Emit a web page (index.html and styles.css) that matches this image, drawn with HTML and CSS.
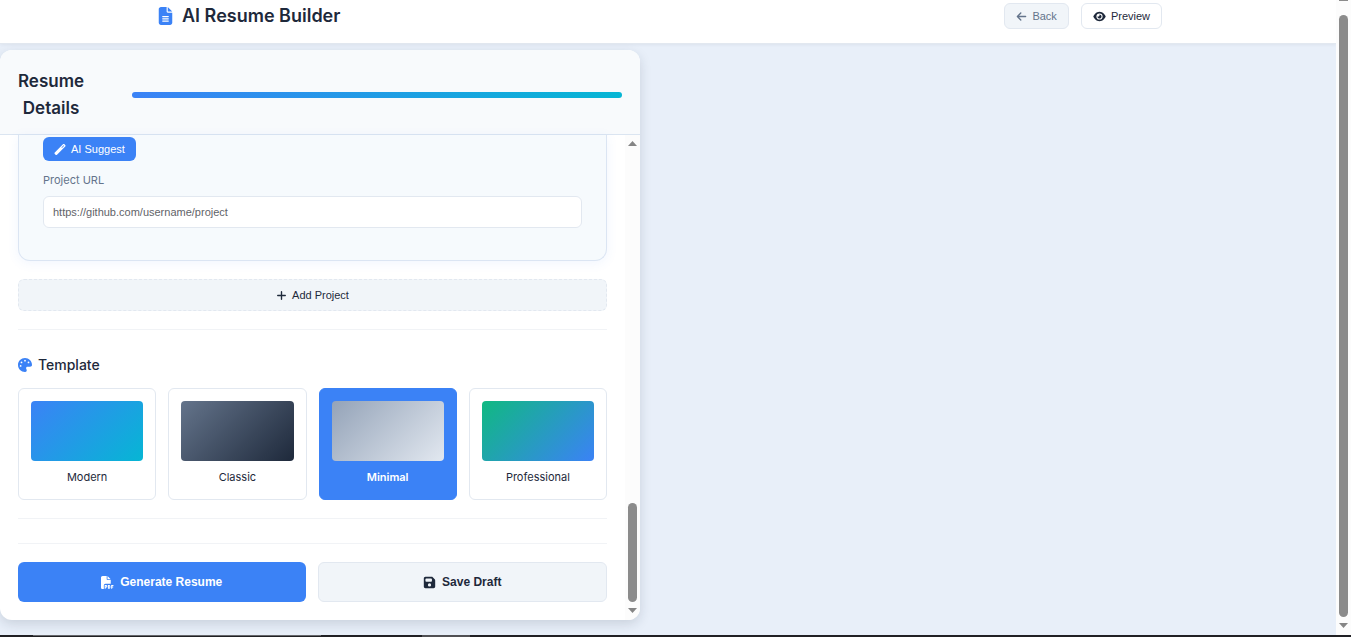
FILE: index.html
```html
<!DOCTYPE html>
<html lang="en">
<head>
<meta charset="utf-8">
<meta name="viewport" content="width=device-width, initial-scale=1">
<title>AI Resume Builder</title>
<link rel="stylesheet" href="styles.css">
</head>
<body>
<div class="window">
  <div class="viewport">
    <div class="page">
      <header class="topbar">
        <div class="topbar-inner">
          <h1 class="logo">
            <svg class="logo-icon" viewBox="0 0 384 512" aria-hidden="true"><path d="M64 0C28.700 0 0 28.700 0 64V448c0 35.300 28.700 64 64 64H320c35.300 0 64-28.700 64-64V160H256c-17.700 0-32-14.300-32-32V0H64zM256 0V128H384L256 0zM112 256H272c8.800 0 16 7.200 16 16s-7.200 16-16 16H112c-8.800 0-16-7.200-16-16s7.200-16 16-16zm0 64H272c8.800 0 16 7.200 16 16s-7.200 16-16 16H112c-8.800 0-16-7.200-16-16s7.200-16 16-16zm0 64H272c8.800 0 16 7.200 16 16s-7.200 16-16 16H112c-8.800 0-16-7.200-16-16s7.200-16 16-16z"/></svg>
            AI Resume Builder
          </h1>
          <nav class="topbar-actions">
            <button class="btn btn-back" type="button">
              <svg class="icon" viewBox="0 0 448 512" aria-hidden="true"><path d="M9.400 233.400c-12.500 12.500-12.500 32.800 0 45.300l160 160c12.500 12.500 32.800 12.500 45.300 0s12.500-32.800 0-45.300L109.200 288 416 288c17.700 0 32-14.300 32-32s-14.300-32-32-32l-306.700 0L214.600 118.600c12.500-12.500 12.500-32.800 0-45.300s-32.800-12.500-45.300 0l-160 160z"/></svg>
              Back
            </button>
            <button class="btn btn-preview" type="button">
              <svg class="icon icon-wide" viewBox="0 0 576 512" aria-hidden="true"><path d="M288 32c-80.800 0-145.500 36.800-192.600 80.600C48.600 156 17.300 208 2.500 243.700c-3.300 7.900-3.300 16.700 0 24.600C17.300 304 48.600 356 95.400 399.400C142.500 443.200 207.200 480 288 480s145.500-36.800 192.600-80.600c46.800-43.500 78.100-95.400 93-131.100c3.300-7.900 3.300-16.700 0-24.600c-14.900-35.700-46.200-87.700-93-131.100C433.500 68.800 368.800 32 288 32zM144 256a144 144 0 1 1 288 0 144 144 0 1 1 -288 0zm144-64c0 35.300-28.700 64-64 64c-7.100 0-13.900-1.200-20.300-3.300c-5.500-1.800-11.900 1.600-11.700 7.400c.3 6.900 1.300 13.800 3.200 20.700c13.700 51.200 66.400 81.600 117.600 67.900s81.600-66.400 67.900-117.600c-11.100-41.500-47.800-69.400-88.600-71.100c-5.800-.2-9.200 6.100-7.400 11.700c2.100 6.400 3.300 13.200 3.300 20.300z"/></svg>
              Preview
            </button>
          </nav>
        </div>
      </header>

      <main class="workspace">
        <section class="panel">
          <div class="panel-head">
            <h2 class="panel-title">Resume<br>Details</h2>
            <div class="progress" role="progressbar" aria-label="Resume progress" aria-valuenow="100" aria-valuemin="0" aria-valuemax="100"></div>
          </div>
          <div class="panel-body">
            <form class="form">
              <div class="project">
                <button class="btn btn-suggest" type="button">
                  <svg class="icon icon-wand" viewBox="0 0 512 512" aria-hidden="true"><path d="M14.100 463.300c-18.700-18.700-18.700-49.100 0-67.900L395.400 14.100c18.700-18.700 49.100-18.700 67.900 0l34.600 34.600c18.700 18.700 18.700 49.100 0 67.900L116.500 497.900c-18.700 18.700-49.100 18.700-67.900 0L14.100 463.300zM347.600 187.600l105-105L429.400 59.300l-105 105 23.300 23.300z"/></svg>
                  AI Suggest
                </button>
                <label class="field-label" for="project-url">Project URL</label>
                <input class="field" id="project-url" type="url" placeholder="https://github.com/username/project">
              </div>
              <button class="btn btn-add" type="button">
                <svg class="icon" viewBox="0 0 448 512" aria-hidden="true"><path d="M256 80c0-17.700-14.300-32-32-32s-32 14.300-32 32V224H48c-17.700 0-32 14.300-32 32s14.300 32 32 32H192V432c0 17.700 14.300 32 32 32s32-14.300 32-32V288H400c17.700 0 32-14.300 32-32s-14.300-32-32-32H256V80z"/></svg>
                Add Project
              </button>
              <div class="section">
                <h3 class="section-title">
                  <svg class="section-icon" viewBox="0 0 512 512" aria-hidden="true"><path d="M512 256c0 .9 0 1.800 0 2.700c-.4 36.500-33.600 61.300-70.100 61.300H344c-26.500 0-48 21.500-48 48c0 3.400 .4 6.700 1 9.900c2.100 10.200 6.500 20 10.800 29.900c6.100 13.800 12.100 27.500 12.100 42c0 31.800-21.600 60.700-53.400 62c-3.500 .1-7 .2-10.600 .2C114.600 512 0 397.400 0 256S114.600 0 256 0S512 114.600 512 256zM128 288a32 32 0 1 0 -64 0 32 32 0 1 0 64 0zm0-96a32 32 0 1 0 0-64 32 32 0 1 0 0 64zM288 96a32 32 0 1 0 -64 0 32 32 0 1 0 64 0zm96 96a32 32 0 1 0 0-64 32 32 0 1 0 0 64z"/></svg>
                  Template
                </h3>
                <div class="templates">
                  <label class="template"><input class="template-radio" type="radio" name="template"><span class="swatch swatch-modern"></span>Modern</label>
                  <label class="template"><input class="template-radio" type="radio" name="template"><span class="swatch swatch-classic"></span>Classic</label>
                  <label class="template"><input class="template-radio" type="radio" name="template" checked><span class="swatch swatch-minimal"></span>Minimal</label>
                  <label class="template"><input class="template-radio" type="radio" name="template"><span class="swatch swatch-professional"></span>Professional</label>
                </div>
              </div>
              <div class="actions">
                <button class="btn btn-large btn-generate" type="button">
                  <svg class="icon-large" viewBox="0 0 512 512" aria-hidden="true"><path d="M0 64C0 28.700 28.700 0 64 0H224V128c0 17.700 14.300 32 32 32H384V304H176c-35.300 0-64 28.700-64 64V512H64c-35.300 0-64-28.700-64-64V64zM384 128H256V0L384 128z"/><path class="badge-lines" d="M164 498V370h30a34 34 0 0 1 0 72h-30M292 370h22a34 34 0 0 1 34 34v46a34 34 0 0 1-34 34h-22zM420 498V370h70M420 434h60"/></svg>
                  Generate Resume
                </button>
                <button class="btn btn-large btn-save" type="button">
                  <svg class="icon-large" viewBox="0 0 448 512" aria-hidden="true"><path d="M64 32C28.700 32 0 60.700 0 96V416c0 35.300 28.700 64 64 64H384c35.300 0 64-28.700 64-64V173.300c0-17-6.700-33.300-18.700-45.300L352 50.700C340 38.700 323.700 32 306.700 32H64zm0 96c0-17.700 14.300-32 32-32H288c17.700 0 32 14.300 32 32v64c0 17.700-14.300 32-32 32H96c-17.700 0-32-14.300-32-32V128zM224 288a64 64 0 1 1 0 128 64 64 0 1 1 0-128z"/></svg>
                  Save Draft
                </button>
              </div>
            </form>
            <div class="scrollbar scrollbar-panel" aria-hidden="true">
              <span class="arrow arrow-up"></span>
              <span class="thumb thumb-short"></span>
              <span class="arrow arrow-down"></span>
            </div>
          </div>
        </section>
      </main>
    </div>
    <div class="scrollbar scrollbar-page" aria-hidden="true">
      <span class="thumb-cap"></span>
      <span class="thumb thumb-long"></span>
      <span class="arrow arrow-down"></span>
    </div>
  </div>
  <div class="strip" aria-hidden="true"><span class="strip-start"></span><span class="strip-search"></span><span class="strip-gap"></span><span class="strip-active"></span></div>
</div>
</body>
</html>
```
FILE: styles.css
```css
* {
  box-sizing: border-box;
}

body {
  margin: 0;
  font-family: Inter, "Liberation Sans", sans-serif;
  font-optical-sizing: none;
  color: #1e293b;
  background: #e8eff9;
}

h1, h2, h3 {
  margin: 0;
}

svg {
  fill: currentColor;
  flex: none;
}

.window {
  display: flex;
  flex-direction: column;
  min-height: 100vh;
}

.viewport {
  display: flex;
  flex: 1;
}

.page {
  flex: 1;
  min-width: 0;
}

/* Top bar */
.topbar {
  padding: 3px 0 14px;
  background: #fff;
  border-bottom: 1px solid #e2e8f0;
  box-shadow: 0 1px 3px rgba(30, 41, 59, 0.06);
}

.topbar-inner {
  display: flex;
  align-items: center;
  justify-content: space-between;
  max-width: 1020px;
  margin: 0 auto;
  padding-right: 16px;
}

.logo {
  display: flex;
  align-items: center;
  gap: 9px;
  font-size: 18px;
  line-height: 26px;
  font-weight: 600;
}

.logo-icon {
  width: 15px;
  height: 18px;
  color: #3b82f6;
}

.topbar-actions {
  display: flex;
  gap: 12px;
}

/* Buttons */
.btn {
  display: flex;
  align-items: center;
  justify-content: center;
  gap: 5px;
  height: 26px;
  padding: 0 11px;
  border: 1px solid #e2e8f0;
  border-radius: 6px;
  font-family: "Liberation Sans", Arial, sans-serif;
  font-size: 11px;
  color: #1e293b;
  background: #fff;
  cursor: pointer;
}

.icon {
  width: 11px;
  height: 11px;
}

.icon-wide {
  width: 13px;
}

.icon-wand {
  width: 12px;
}

.btn-back {
  color: #64748b;
  background: #f1f5f9;
}

.btn-preview {
  padding: 0 11px;
}

.btn-suggest {
  height: 24px;
  padding: 0 11px;
  border: 0;
  color: #fff;
  background: #3b82f6;
}

.btn-add {
  width: 100%;
  height: 32px;
  margin-top: 18px;
  border-style: dashed;
  background: #f1f5f9;
}

.btn-large {
  flex: 1;
  height: 40px;
  gap: 6px;
  font-size: 12px;
  font-weight: 600;
}

.btn-generate {
  border: 0;
  color: #fff;
  background: #3b82f6;
}

.btn-save {
  background: #f1f5f9;
}

.icon-large {
  width: 13px;
  height: 13px;
}

.badge-lines {
  fill: none;
  stroke: currentColor;
  stroke-width: 40;
}

/* Panel */
.workspace {
  padding: 6px 0 15px;
}

.panel {
  max-width: 640px;
  border-radius: 12px;
  background: #fff;
  box-shadow: 0 4px 12px rgba(30, 41, 59, 0.15);
  overflow: hidden;
}

.panel-head {
  display: flex;
  align-items: center;
  gap: 48px;
  padding: 18px 18px 12px;
  border-bottom: 1px solid #dbe5f1;
  background: #f8fafc;
}

.panel-title {
  font-size: 17px;
  line-height: 27px;
  font-weight: 600;
  text-align: center;
}

.progress {
  flex: 1;
  height: 6px;
  border-radius: 3px;
  background: linear-gradient(90deg, #3b82f6, #06b6d4);
}

.panel-body {
  display: flex;
}

.form {
  flex: 1;
  min-width: 0;
  padding: 0 18px 18px;
}

.project {
  padding: 2px 24px 32px;
  border: 1px solid #dbe5f3;
  border-top: 0;
  border-radius: 0 0 12px 12px;
  background: #f6fafd;
  box-shadow: 0 2px 12px rgba(59, 130, 246, 0.08);
}

.field-label {
  display: block;
  margin: 11px 0 8px;
  font-size: 11px;
  line-height: 16px;
  font-weight: 400;
  color: #64748b;
}

.field {
  display: block;
  width: 100%;
  height: 32px;
  padding: 0 9px;
  border: 1px solid #e2e8f0;
  border-radius: 6px;
  font-family: "Liberation Sans", Arial, sans-serif;
  font-size: 11px;
  background: #fff;
}

.field::placeholder {
  color: #5f6368;
}

.section {
  margin-top: 18px;
  padding: 24px 0 18px;
  border-top: 1px solid #f1f3f6;
  border-bottom: 1px solid #f1f3f6;
}

.section-title {
  display: flex;
  align-items: center;
  gap: 6px;
  margin-bottom: 12px;
  font-size: 14px;
  line-height: 22px;
  font-weight: 500;
}

.section-icon {
  width: 14px;
  height: 14px;
  color: #3b82f6;
}

.templates {
  display: grid;
  grid-template-columns: repeat(4, 1fr);
  gap: 12px;
}

.template {
  position: relative;
  height: 112px;
  padding: 12px;
  border: 1px solid #e2e8f0;
  border-radius: 6px;
  font-size: 11px;
  line-height: 16px;
  font-weight: 400;
  text-align: center;
  cursor: pointer;
}

.template-radio {
  position: absolute;
  opacity: 0;
}

.template:has(:checked) {
  border-color: #3b82f6;
  font-weight: 600;
  color: #fff;
  background: #3b82f6;
}

.swatch {
  display: block;
  height: 60px;
  margin-bottom: 8px;
  border-radius: 4px;
}

.swatch-modern {
  background: linear-gradient(135deg, #3b82f6, #06b6d4);
}

.swatch-classic {
  background: linear-gradient(135deg, #64748b, #1e293b);
}

.swatch-minimal {
  background: linear-gradient(135deg, #94a3b8, #e2e8f0);
}

.swatch-professional {
  background: linear-gradient(135deg, #10b981, #3b82f6);
}

.actions {
  display: flex;
  gap: 12px;
  margin-top: 24px;
  padding-top: 18px;
  border-top: 1px solid #f1f3f6;
}

/* Scrollbars */
.scrollbar {
  display: flex;
  flex-direction: column;
  align-items: center;
  width: 15px;
  background: #fcfcfc;
}

.scrollbar-panel {
  padding: 6px 0 7px;
}

.scrollbar-page {
  padding-bottom: 7px;
}

.thumb {
  width: 9px;
  margin-bottom: 6px;
  border-radius: 5px;
  background: #8b8b8b;
}

.thumb-short {
  height: 99px;
  margin-top: auto;
}

.thumb-long {
  flex: 1;
  margin-top: 14px;
}

.thumb-cap {
  width: 9px;
  height: 1px;
  background: #8b8b8b;
}

.arrow {
  width: 9px;
  height: 5px;
  background: #858585;
}

.arrow-up {
  clip-path: polygon(50% 0, 100% 100%, 0 100%);
}

.arrow-down {
  clip-path: polygon(0 0, 100% 0, 50% 100%);
}

/* Desktop edge under the window */
.strip {
  display: flex;
  height: 2px;
  background: #202024;
}

.strip-start {
  width: 33px;
}

.strip-search {
  width: 288px;
  border-top: 1px solid #66676b;
}

.strip-gap {
  width: 101px;
}

.strip-active {
  width: 48px;
  background: #505054;
}
```
